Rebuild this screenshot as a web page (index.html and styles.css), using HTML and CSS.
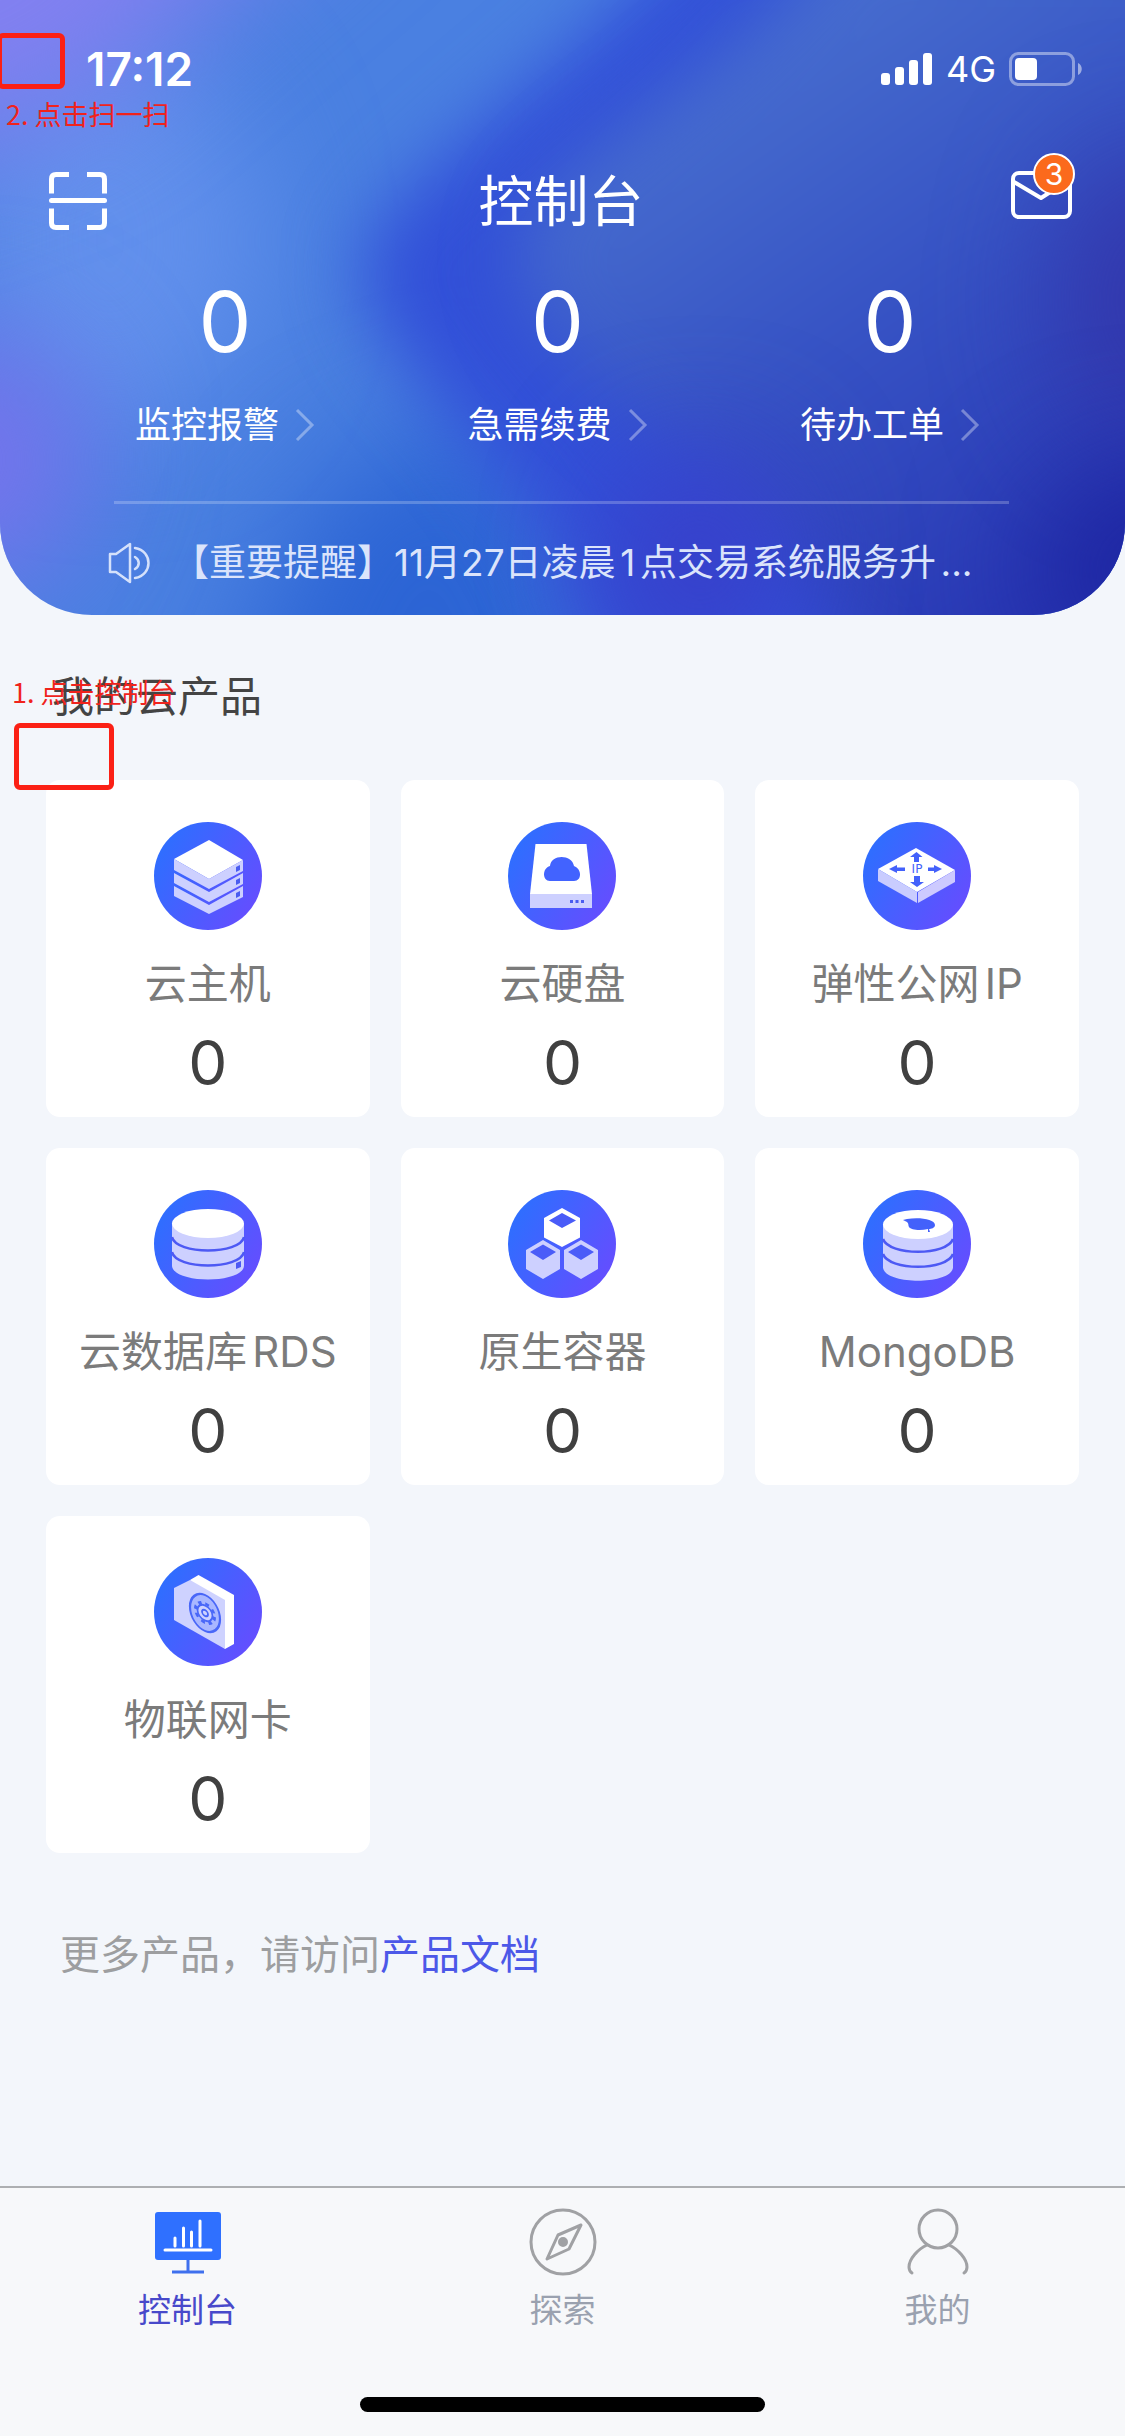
FILE: index.html
```html
<!DOCTYPE html>
<html lang="zh-CN">
<head>
<meta charset="utf-8">
<meta name="viewport" content="width=device-width, initial-scale=1">
<title>控制台</title>
<link rel="stylesheet" href="styles.css">
</head>
<body>
<svg class="defs" aria-hidden="true">
  <defs>
    <linearGradient id="disc" x1="0" y1="0.2" x2="1" y2="0.8">
      <stop offset="0" stop-color="#2b70ff"/>
      <stop offset="1" stop-color="#674cff"/>
    </linearGradient>
  </defs>
</svg>

<header class="hero">
  <svg class="hero-bg" viewBox="0 0 1125 615" preserveAspectRatio="none" aria-hidden="true">
    <defs>
      <filter id="soft" x="-100%" y="-100%" width="300%" height="300%" color-interpolation-filters="sRGB"><feGaussianBlur stdDeviation="60"/></filter>
      <filter id="mid" x="-50%" y="-50%" width="200%" height="200%" color-interpolation-filters="sRGB"><feGaussianBlur stdDeviation="36"/></filter>
      <linearGradient id="sweep" gradientUnits="userSpaceOnUse" x1="640" y1="60" x2="1040" y2="640">
        <stop offset="0" stop-color="#4a72d0"/>
        <stop offset="0.5" stop-color="#3652c4"/>
        <stop offset="1" stop-color="#2836b4"/>
      </linearGradient>
    </defs>
    <rect width="1125" height="615" fill="#4a80e1"/>
    <ellipse cx="110" cy="240" rx="150" ry="190" fill="#6290ec" filter="url(#soft)"/>
    <path d="M-150 -150H380L80 110L-150 190Z" fill="#8280f0" filter="url(#soft)"/>
    <ellipse cx="-30" cy="460" rx="120" ry="130" fill="#7474ec" filter="url(#soft)"/>
    <path d="M200 780 L320 480 L500 400 L660 780Z" fill="#2c64d4" filter="url(#soft)"/>
    <path d="M690 -80 C600 60 360 190 360 270 C370 380 540 440 600 700 L900 700 L900 -80Z" fill="#3250d8" filter="url(#mid)"/>
    <path d="M850 -80 C730 90 510 170 520 260 C530 380 700 430 800 580 L900 740 L1300 740 L1300 -80Z" fill="url(#sweep)" filter="url(#mid)"/>
    <ellipse cx="700" cy="560" rx="90" ry="110" fill="#383fca" filter="url(#soft)"/>
    <ellipse cx="1150" cy="300" rx="90" ry="150" fill="#3337ac" filter="url(#soft)"/>
    <ellipse cx="1160" cy="570" rx="130" ry="110" fill="#1e26a2" filter="url(#soft)"/>
  </svg>

  <div class="status">
    <time class="clock">17:12</time>
    <div class="signals">
      <svg width="52" height="32" viewBox="0 0 52 32" fill="#fff" aria-hidden="true">
        <rect y="20" width="9" height="12" rx="3"/><rect x="14" y="14" width="9" height="18" rx="3"/>
        <rect x="28" y="7" width="9" height="25" rx="3"/><rect x="42" width="9" height="32" rx="3"/>
      </svg>
      <span class="network">4G</span>
      <svg width="74" height="34" viewBox="0 0 74 34" aria-hidden="true">
        <rect x="1.5" y="1.5" width="63" height="31" rx="8" fill="none" stroke="#fff" stroke-opacity=".42" stroke-width="3"/>
        <rect x="6" y="6" width="22" height="22" rx="4" fill="#fff"/>
        <path d="M69 11c5 2 5 10 0 12z" fill="#fff" fill-opacity=".5"/>
      </svg>
    </div>
  </div>

  <div class="titlebar">
    <button class="icon-btn" type="button" aria-label="扫一扫">
      <svg width="58" height="58" viewBox="0 0 58 58" fill="none" stroke="#fff" stroke-width="5" aria-hidden="true">
        <path d="M2.500 21.500V7q0-4.500 4.500-4.500h13M38 2.500H51q4.500 0 4.500 4.500v14.500M55.500 36.500V51q0 4.500-4.500 4.500H38M20 55.500H7q-4.500 0-4.500-4.500V36.500"/>
        <path d="M2.500 28.500h53" stroke-linecap="round"/>
      </svg>
    </button>
    <h1 class="title">控制台</h1>
    <button class="icon-btn" type="button" aria-label="消息">
      <svg width="62" height="60" viewBox="0 0 62 60" fill="none" stroke="#fff" stroke-width="4" aria-hidden="true">
        <rect x="2" y="2" width="57" height="44" rx="6"/>
        <path d="M3 11l27 16 25-16" stroke-linejoin="round"/>
      </svg>
      <span class="badge">3</span>
    </button>
  </div>

  <nav class="stats" aria-label="概览">
    <a class="stat" href="#alarm">
      <span class="stat-num">0</span>
      <span class="stat-label">监控报警<svg width="20" height="34" viewBox="0 0 20 34"><path d="M2 2l15 15L2 32"/></svg></span>
    </a>
    <a class="stat" href="#renew">
      <span class="stat-num">0</span>
      <span class="stat-label">急需续费<svg width="20" height="34" viewBox="0 0 20 34"><path d="M2 2l15 15L2 32"/></svg></span>
    </a>
    <a class="stat" href="#orders">
      <span class="stat-num">0</span>
      <span class="stat-label">待办工单<svg width="20" height="34" viewBox="0 0 20 34"><path d="M2 2l15 15L2 32"/></svg></span>
    </a>
  </nav>

  <a class="notice" href="#notice">
    <svg width="42" height="42" viewBox="0 0 42 42" fill="none" stroke="#d5e1fb" stroke-width="2.500" stroke-linejoin="round" stroke-linecap="round" aria-hidden="true">
      <path d="M2 12h6L22 2v38L8 30H2z"/><path d="M27 15c5 3 5 9 0 12M27 6c18 3 18 27 0 30"/>
    </svg>
    <span class="notice-text">【重要提醒】<time class="date">11月27日</time>凌晨1点交易系统服务升...</span>
  </a>
</header>

<main class="content">
  <h2 class="section-title">我的云产品</h2>
  <div class="grid">
    <a class="card" href="#ecs">
      <svg class="card-icon" viewBox="0 0 108 108" aria-hidden="true">
        <circle cx="54" cy="54" r="54" fill="url(#disc)"/>
        <path d="M55 18L89 38 55 57 20 37z" fill="#fff"/>
        <g fill="#cdd0ff"><path d="M20 37l35 20 34-19v11L55 67 20 48z"/><path d="M20 51l35 19 34-19v11L55 80 20 61z"/><path d="M20 64l35 19 34-19v11L55 92 20 74z"/></g>
        <g fill="#4a5cf0"><path d="M82 45l4-2v5l-4 2zM82 58l4-2v5l-4 2zM82 71l4-2v5l-4 2z"/></g>
      </svg>
      <span class="card-name">云主机</span><span class="card-num">0</span>
    </a>
    <a class="card" href="#disk">
      <svg class="card-icon" viewBox="0 0 108 108" aria-hidden="true">
        <circle cx="54" cy="54" r="54" fill="url(#disc)"/>
        <path d="M27.500 22h51l5.500 50H22z" fill="#fff"/><path d="M22 72h62v14H22z" fill="#cdd0ff"/>
        <path d="M42 59c-8 0-8-13 0-15 1-12 22-12 24 0 8 3 8 15 0 15z" fill="#4263ff"/>
        <path d="M62 78h3v3h-3zM67.500 78h3v3h-3zM73 78h3v3h-3z" fill="#4a5cf0"/>
      </svg>
      <span class="card-name">云硬盘</span><span class="card-num">0</span>
    </a>
    <a class="card" href="#eip">
      <svg class="card-icon" viewBox="0 0 108 108" aria-hidden="true">
        <circle cx="54" cy="54" r="54" fill="url(#disc)"/>
        <path d="M53 26l39 22-38 22-39-23z" fill="#fff"/>
        <path d="M15 47l39 23v11L15 59z" fill="#c9ccff"/><path d="M92 48v12L55 81V70z" fill="#cdcaff"/>
        <g fill="#4361fb"><path d="M26 47l8-4v2.500h8v3.500h-8V51zM79 47l-8-4v2.500h-6v3.500h6V51zM53.500 30l6 5H56v5h-5v-5h-4zM54 65l-7-5h4v-6h6v6h4z"/>
        <text class="ip-text" x="54" y="51" text-anchor="middle">IP</text></g>
      </svg>
      <span class="card-name">弹性公网IP</span><span class="card-num">0</span>
    </a>
    <a class="card" href="#rds">
      <svg class="card-icon" viewBox="0 0 108 108" aria-hidden="true">
        <circle cx="54" cy="54" r="54" fill="url(#disc)"/>
        <path d="M18 34v42c2 18 70 18 72 0V34z" fill="#cdd0ff"/>
        <ellipse cx="54" cy="33.500" rx="36" ry="14.500" fill="#fff"/>
        <g fill="none" stroke="#4d59f4" stroke-width="2.500"><path d="M18 47c4 18 68 18 72 0M18 62c4 18 68 18 72 0"/></g>
        <path d="M82 73l5-2v6l-5 2z" fill="#4d59f4"/>
      </svg>
      <span class="card-name">云数据库RDS</span><span class="card-num">0</span>
    </a>
    <a class="card" href="#container">
      <svg class="card-icon" viewBox="0 0 108 108" aria-hidden="true">
        <circle cx="54" cy="54" r="54" fill="url(#disc)"/>
        <path d="M54 18l18 10v19.500L54 57 36 47.500V28z" fill="#fff"/>
        <path d="M35 50l17 10v19L35 89 18 79V60zM73 50l17 10v19L73 89 56 79V60z" fill="#cdd0ff"/>
        <path d="M54 23l14 7.500L54 38l-13-7.500zM35 54.500L48 62l-13 8-13-8zM73 54.500L86 62l-13 8-13-8z" fill="#4a5cf8"/>
      </svg>
      <span class="card-name">原生容器</span><span class="card-num">0</span>
    </a>
    <a class="card" href="#mongodb">
      <svg class="card-icon" viewBox="0 0 108 108" aria-hidden="true">
        <circle cx="54" cy="54" r="54" fill="url(#disc)"/>
        <path d="M20 35v43c3 17 67 17 70 0V35z" fill="#cdd0ff"/>
        <ellipse cx="55" cy="34.500" rx="35" ry="14.500" fill="#fff"/>
        <g fill="none" stroke="#4d59f4" stroke-width="2.500"><path d="M20 49c6 17 64 17 70 0M20 64c6 17 64 17 70 0"/></g>
        <path d="M40 30l4-1c12-2 28 0 28 6 0 3-4 4-6 4l1 3h-2v-3c-8 2-17 1-19-2-1-2 0-3-2-5z" fill="#4361fb"/>
      </svg>
      <span class="card-name">MongoDB</span><span class="card-num">0</span>
    </a>
    <a class="card" href="#iot">
      <svg class="card-icon" viewBox="0 0 108 108" aria-hidden="true">
        <circle cx="54" cy="54" r="54" fill="url(#disc)"/>
        <path d="M36 22l8.500-5L80 37v49l-9 5z" fill="#fff"/>
        <path d="M20 30l16-8 35 20v49L20 62z" fill="#ced2ff"/>
        <g transform="matrix(1 .42 0 1 51 55)" fill="#a9b7ff" stroke="#4967f8">
          <ellipse rx="15" ry="18" stroke-width="2.200"/>
          <circle r="9.500" fill="none" stroke-width="3" stroke-dasharray="3.700 3.760"/>
          <circle r="7.500" fill="#ced2ff" stroke-width="1.800"/><circle r="3" fill="#ced2ff" stroke-width="1.800"/>
        </g>
      </svg>
      <span class="card-name">物联网卡</span><span class="card-num">0</span>
    </a>
  </div>
  <p class="more">更多产品，请访问<a href="#docs">产品文档</a></p>
</main>

<footer class="dock">
  <nav class="tabs" aria-label="主导航">
    <a class="tab tab-active" href="#console" aria-current="page">
      <svg width="68" height="68" viewBox="0 0 68 68" aria-hidden="true">
        <rect x="1" y="4" width="66" height="48" rx="3" fill="#2f70ff"/>
        <path d="M21 30v8M29.500 20v18M37.500 24v14M46 13v25M11 42h46" stroke="#fff" stroke-width="3" stroke-linecap="round"/>
        <path d="M34 52v11M18 64h32" stroke="#3f70ee" stroke-width="3"/>
      </svg>
      <span>控制台</span>
    </a>
    <a class="tab" href="#explore">
      <svg width="68" height="68" viewBox="0 0 68 68" fill="none" stroke="#a0a1a4" stroke-width="3" stroke-linejoin="round" aria-hidden="true">
        <circle cx="34" cy="34" r="32"/><path d="M52 17L40 41 18 51 29 27z"/><circle cx="34" cy="34" r="3.500" fill="#a0a1a4"/>
      </svg>
      <span>探索</span>
    </a>
    <a class="tab" href="#mine">
      <svg width="68" height="68" viewBox="0 0 68 68" fill="none" stroke="#a0a1a4" stroke-width="3" stroke-linecap="round" aria-hidden="true">
        <circle cx="34" cy="21" r="19"/><path d="M23 37C14 41 5 51 5 59q0 4 3 6M45 37c9 4 18 14 18 22q0 4-3 6"/>
      </svg>
      <span>我的</span>
    </a>
  </nav>
  <div class="home-bar"></div>
</footer>

<div class="mark-box mark-box-scan"></div>
<p class="mark-text mark-text-scan">2. 点击扫一扫</p>
<p class="mark-text mark-text-console">1. 点击控制台</p>
<div class="mark-box mark-box-console"></div>
</body>
</html>
```
FILE: styles.css
```css
* { box-sizing: border-box; }

body {
  margin: 0;
  min-height: 100vh;
  position: relative;
  display: flex;
  flex-direction: column;
  background: #f3f6fb;
  font-family: Inter, "Noto Sans CJK SC", sans-serif;
  color: #444;
  text-autospace: normal;
}

a { color: inherit; text-decoration: none; }
h1, h2, p { margin: 0; font-weight: 400; }

.defs { position: absolute; width: 0; height: 0; }

/* Header */
.hero {
  position: relative;
  z-index: 0;
  overflow: hidden;
  padding-bottom: 28px;
  border-radius: 0 0 92px 92px;
  color: #fff;
}
.hero-bg {
  position: absolute;
  inset: 0;
  z-index: -1;
  width: 100%;
  height: 100%;
}

.status {
  display: flex;
  align-items: center;
  justify-content: space-between;
  height: 138px;
  padding: 0 42px 0 86px;
}
.clock { font-size: 46px; font-weight: 600; }
.signals { display: flex; align-items: center; gap: 13px; }
.network { font-size: 36px; }

.titlebar {
  display: grid;
  grid-template-columns: 1fr auto 1fr;
  align-items: center;
  height: 126px;
  padding: 0 52px 0 49px;
}
.title { font-size: 55px; line-height: 72px; }
.icon-btn {
  position: relative;
  justify-self: start;
  padding: 0;
  border: 0;
  background: none;
  color: #fff;
  font: inherit;
}
.icon-btn:last-child { justify-self: end; }
.icon-btn svg { display: block; }
.badge {
  position: absolute;
  top: -18px;
  right: -2px;
  width: 42px;
  height: 42px;
  border: 2px solid #fff;
  border-radius: 50%;
  background: #fb6a1c;
  font-size: 30px;
  line-height: 38px;
  text-align: center;
}

.stats {
  display: flex;
  justify-content: space-between;
  padding: 16px 145px 52px 135px;
}
.stat {
  display: flex;
  flex-direction: column;
  align-items: center;
  gap: 37px;
}
.stat-num { font-size: 84px; line-height: 84px; }
.stat-label {
  display: flex;
  align-items: center;
  gap: 16px;
  font-size: 36px;
  line-height: 48px;
}
.stat-label svg {
  fill: none;
  stroke: #fff;
  stroke-opacity: .35;
  stroke-width: 3;
}

.notice {
  display: flex;
  align-items: center;
  gap: 22px;
  margin: 0 116px 0 114px;
  padding-top: 35px;
  border-top: 3px solid rgba(255, 255, 255, .22);
  color: #dbe4fb;
}
.notice svg { flex: none; margin-left: -6px; }
.notice-text {
  flex: 1;
  font-size: 37px;
  line-height: 48px;
  white-space: nowrap;
}
.date { text-autospace: no-autospace; }

/* Products */
.content { padding: 52px 46px 60px; }
.section-title {
  padding-left: 6px;
  font-size: 42px;
  line-height: 60px;
}
.grid {
  display: grid;
  grid-template-columns: repeat(3, 1fr);
  gap: 31px;
  margin-top: 53px;
}
.card {
  display: flex;
  flex-direction: column;
  align-items: center;
  padding: 42px 0 19px;
  border-radius: 14px;
  background: #fff;
}
.card-icon { width: 108px; height: 108px; }
.card-name {
  margin-top: 24px;
  font-size: 42px;
  line-height: 60px;
  color: #7b7b7b;
  white-space: nowrap;
}
.card-num {
  margin-top: 14px;
  font-size: 62px;
  line-height: 70px;
  color: #404040;
}
.ip-text { font: 12px "DejaVu Sans", sans-serif; }

.more {
  margin-top: 72px;
  padding-left: 14px;
  font-size: 40px;
  line-height: 60px;
  color: #9d9ea0;
}
.more a { color: #4c58e8; }

/* Tab bar */
.dock {
  margin-top: auto;
  padding-bottom: 24px;
  border-top: 2px solid #adafb2;
  background: #f7f8fa;
}
.tabs {
  display: grid;
  grid-template-columns: repeat(3, 1fr);
  padding-top: 20px;
}
.tab {
  display: flex;
  flex-direction: column;
  align-items: center;
  gap: 10px;
  font-size: 33px;
  line-height: 48px;
  color: #9aa1af;
}
.tab-active { color: #4849ca; }
.home-bar {
  width: 36%;
  height: 15px;
  margin: 63px auto 0;
  border-radius: 8px;
  background: #000;
}

/* Step annotations drawn over the screen */
.mark-box {
  position: absolute;
  border: 5px solid #fb2015;
  border-radius: 6px;
}
.mark-box-scan { top: 33px; left: -3px; width: 68px; height: 56px; }
.mark-box-console { top: 723px; left: 14px; width: 100px; height: 67px; }
.mark-text {
  position: absolute;
  font-family: "Noto Sans CJK SC", sans-serif;
  font-size: 27px;
  line-height: 32px;
  color: #f0231c;
}
.mark-text-scan { top: 98px; left: 6px; }
.mark-text-console { top: 676px; left: 12px; }
```
